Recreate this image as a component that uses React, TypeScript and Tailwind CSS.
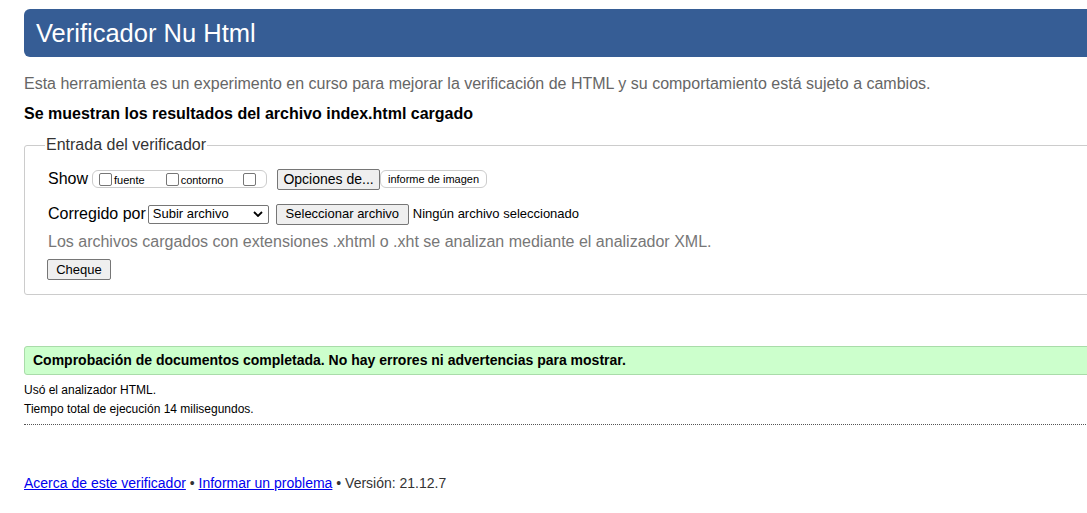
const Box = () => (
	<span className="block h-[13px] w-[13px] shrink-0 rounded-[2px] border border-[#767676] bg-white" />
);

const Chevron = () => (
	<svg width="10" height="6" viewBox="0 0 10 6" className="mr-[5px]">
		<path d="M1 1l4 4 4-4" fill="none" stroke="#000" strokeWidth="1.8" />
	</svg>
);

export default function App() {
	return (
		<div className="h-[513px] w-full overflow-hidden bg-white font-['Liberation_Sans',Arial,sans-serif] text-black">
			<div className="w-[1120px] pl-6 pt-[9px]">
				{/* Header */}
				<header className="flex h-12 items-center rounded-l-[6px] bg-[#365d95] pl-3">
					<h1 className="text-[25.5px] text-white">Verificador Nu Html</h1>
				</header>

				<p className="mt-[15px] text-[16px] leading-6 text-[#666]">
					Esta herramienta es un experimento en curso para mejorar la verificación de HTML y su comportamiento está sujeto a cambios.
				</p>
				<p className="mt-[6px] text-[16px] font-bold leading-6">
					Se muestran los resultados del archivo index.html cargado
				</p>

				{/* Fieldset */}
				<fieldset className="mt-[7px] h-[162px] rounded-[3px] border border-[#ccc] pl-[23px]">
					<legend className="ml-[-3px] px-px text-[16px] leading-6 text-[#333]">Entrada del verificador</legend>

					<div className="mt-[10px] flex items-center text-[16px]">
						<span>Show</span>
						<span className="ml-1 flex h-[18px] w-[175px] items-center rounded-[6px] border border-[#ccc] pl-[6px] text-[11px]">
							<Box />
							<span className="ml-[2px] mt-[2px]">fuente</span>
							<span className="ml-[21px]"><Box /></span>
							<span className="ml-[2px] mt-[2px]">contorno</span>
							<span className="ml-[20px]"><Box /></span>
						</span>
						<span className="ml-[10px] flex h-[21px] w-[103px] items-center justify-center rounded-[2px] border border-[#767676] bg-[#efefef] text-[14px]">
							Opciones de...
						</span>
						<span className="flex h-[18px] w-[107px] items-center justify-center rounded-[6px] border border-[#ccc] text-[11px]">
							informe de imagen
						</span>
					</div>

					<div className="mt-[11px] flex items-center">
						<span className="text-[16px]">Corregido por</span>
						<span className="ml-[2px] flex h-[19px] w-[121px] items-center justify-between rounded-[2px] border border-[#767676] pl-1 text-[13px]">
							Subir archivo
							<Chevron />
						</span>
						<span className="ml-[7px] flex h-[21px] w-[133px] items-center justify-center rounded-[2px] border border-[#767676] bg-[#efefef] text-[13px]">
							Seleccionar archivo
						</span>
						<span className="ml-[4px] text-[13px]">Ningún archivo seleccionado</span>
					</div>

					<p className="mt-[4px] text-[16px] leading-6 text-[#777]">
						Los archivos cargados con extensiones .xhtml o .xht se analizan mediante el analizador XML.
					</p>

					<span className="ml-[-1px] mt-[5px] flex h-[21px] w-[64px] items-center justify-center rounded-[2px] border border-[#767676] bg-[#efefef] text-[13px]">
						Cheque
					</span>
				</fieldset>

				{/* Result */}
				<div className="mt-[51px] flex h-[29px] items-center rounded-l-[3px] border border-[#a9dca9] bg-[#ccffcc] pl-2 text-[14px] font-bold">
					Comprobación de documentos completada. No hay errores ni advertencias para mostrar.
				</div>
				<p className="mt-[6px] text-[12px] leading-[18px]">Usó el analizador HTML.</p>
				<p className="mt-px text-[12px] leading-[18px]">Tiempo total de ejecución 14 milisegundos.</p>
				<div className="mt-[6px] border-t border-dotted border-[#555]" />

				{/* Footer */}
				<p className="mt-[48px] text-[14px] text-[#333]">
					<a href="#" className="text-[#0000ee] underline">Acerca de este verificador</a>
					{" • "}
					<a href="#" className="text-[#0000ee] underline">Informar un problema</a>
					{" • Versión: 21.12.7"}
				</p>
			</div>
		</div>
	);
}
